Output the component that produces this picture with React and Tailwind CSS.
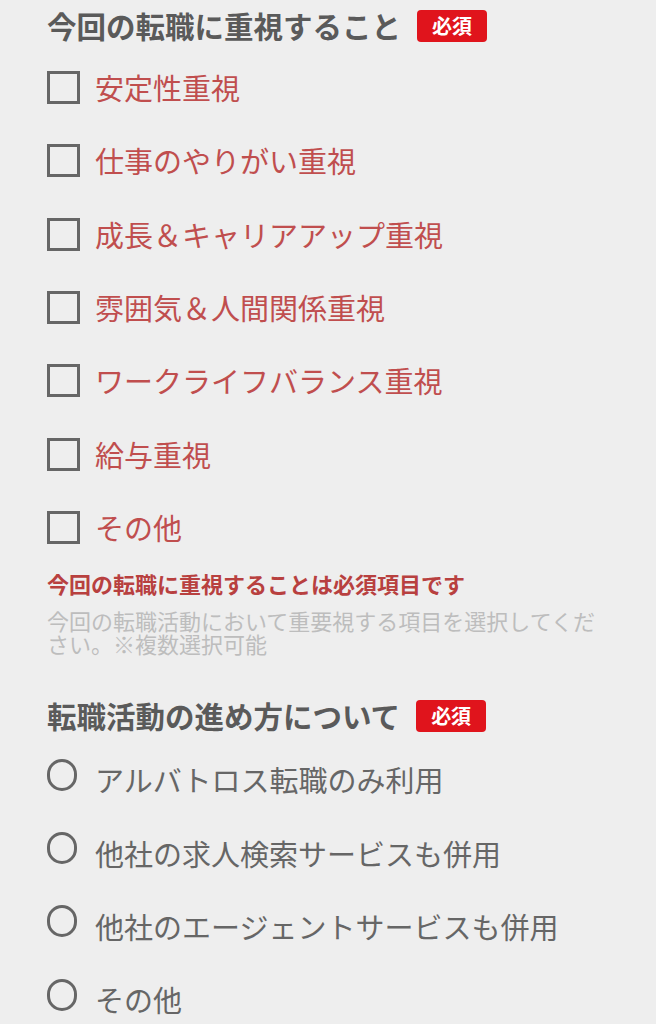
import React from 'react';

const priorities = [
  '安定性重視',
  '仕事のやりがい重視',
  '成長＆キャリアアップ重視',
  '雰囲気＆人間関係重視',
  'ワークライフバランス重視',
  '給与重視',
  'その他',
];

const styles = [
  'アルバトロス転職のみ利用',
  '他社の求人検索サービスも併用',
  '他社のエージェントサービスも併用',
  'その他',
];

const Badge = () => (
  <span className="ml-4 inline-flex h-8 w-[70px] items-center justify-center rounded-[4px] bg-[#e0141c] text-[20px] font-bold leading-none text-white">
    必須
  </span>
);

export default function App() {
  return (
    <div
      className="min-h-[1024px] w-[656px] overflow-hidden bg-[#eeeeee] px-[47px]"
      style={{ fontFamily: '"Noto Sans CJK JP", "Noto Sans", sans-serif' }}
    >
      {/* 重視すること */}
      <div className="flex h-[51px] items-center">
        <h2 className="text-[29.5px] font-bold leading-none text-[#5a5a5a]">今回の転職に重視すること</h2>
        <Badge />
      </div>
      <ul>
        {priorities.map((label) => (
          <li key={label} className="flex h-[73.3px] items-center">
            <span className="h-[33px] w-[33px] shrink-0 border-[3px] border-[#666666]" />
            <span className="ml-[15px] text-[29px] leading-none text-[#c04e4e]">{label}</span>
          </li>
        ))}
      </ul>
      <p className="mt-[5px] text-[22px] font-bold leading-[28px] text-[#b8403f]">
        今回の転職に重視することは必須項目です
      </p>
      <p className="mt-[12px] w-[562px] text-[22px] leading-[23px] text-[#bdbdbd]">
        今回の転職活動において重要視する項目を選択してください。※複数選択可能
      </p>

      {/* 進め方 */}
      <div className="mt-[36px] flex h-[50px] items-center">
        <h2 className="text-[29.5px] font-bold leading-none text-[#5a5a5a]">転職活動の進め方について</h2>
        <Badge />
      </div>
      <ul className="mt-[2px]">
        {styles.map((label) => (
          <li key={label} className="flex h-[73.3px] items-center">
            <span className="mb-[10px] h-[32px] w-[30px] shrink-0 rounded-full border-[3.5px] border-[#666666]" />
            <span className="ml-[18px] text-[29px] leading-none text-[#666666]">{label}</span>
          </li>
        ))}
      </ul>
    </div>
  );
}
